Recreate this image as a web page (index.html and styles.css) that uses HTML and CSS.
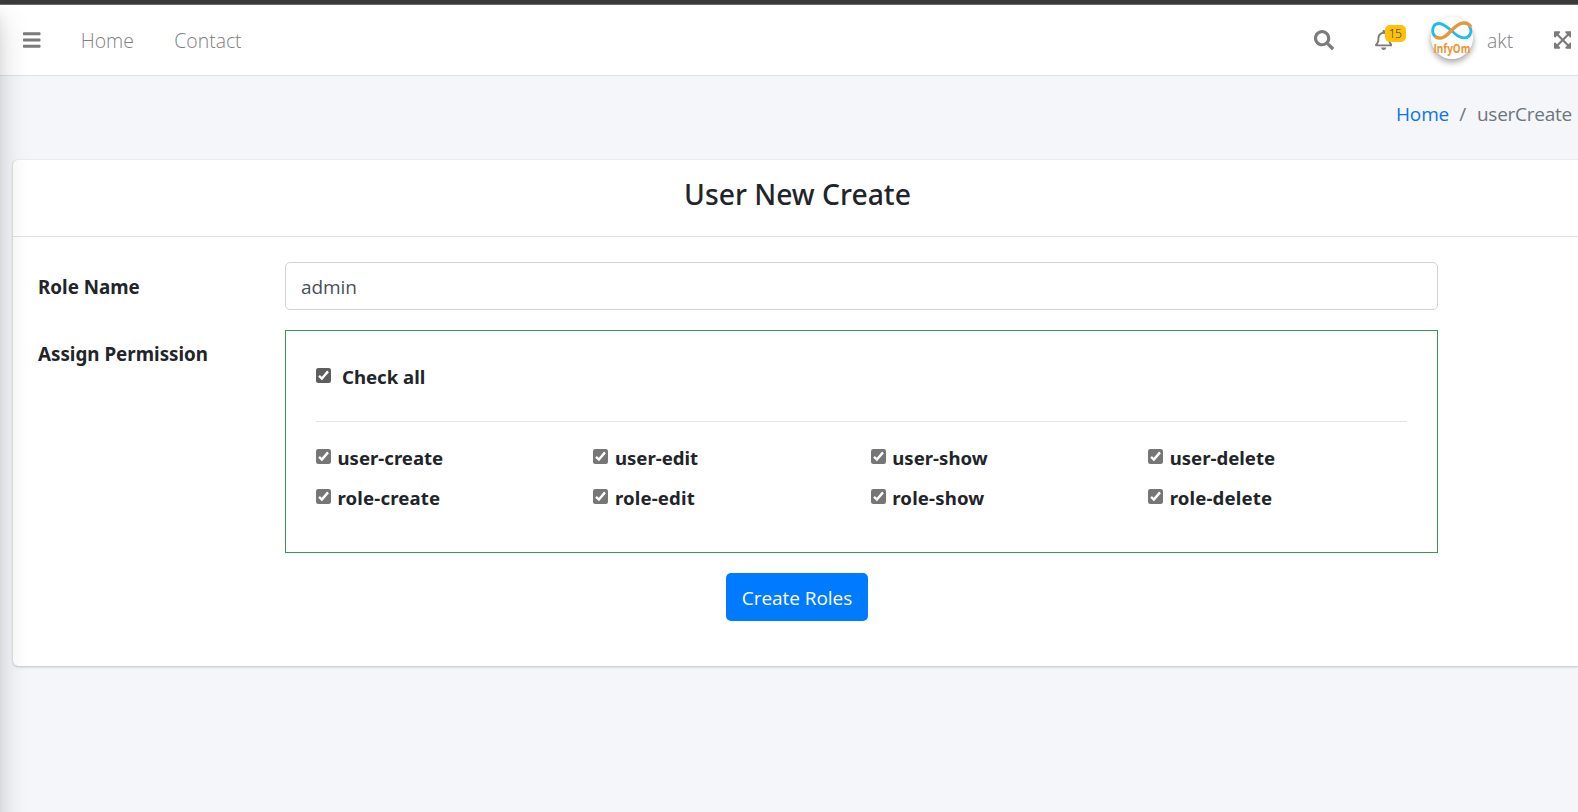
FILE: index.html
```html
<!DOCTYPE html>
<html lang="en">
<head>
<meta charset="utf-8">
<title>User New Create</title>
<link rel="stylesheet" href="styles.css">
</head>
<body>
<svg class="defs" width="0" height="0">
  <symbol id="check" viewBox="0 0 15 15"><rect width="15" height="15" rx="2.3" fill="currentColor"/><path d="M3 7.800 5.900 10.600 12 3.400" fill="none" stroke="#fff" stroke-width="2.400"/></symbol>
</svg>
<div class="topline"></div>
<aside class="sidebar"></aside>
<nav class="navbar">
  <svg class="icon bars" viewBox="0 0 448 512"><path d="M16 132h416c8.837 0 16-7.163 16-16V76c0-8.837-7.163-16-16-16H16C7.163 60 0 67.163 0 76v40c0 8.837 7.163 16 16 16zm0 160h416c8.837 0 16-7.163 16-16v-40c0-8.837-7.163-16-16-16H16c-8.837 0-16 7.163-16 16v40c0 8.837 7.163 16 16 16zm0 160h416c8.837 0 16-7.163 16-16v-40c0-8.837-7.163-16-16-16H16c-8.837 0-16 7.163-16 16v40c0 8.837 7.163 16 16 16z"/></svg>
  <a class="nav-home">Home</a>
  <a class="nav-contact">Contact</a>
  <div class="nav-right">
    <svg class="icon search" viewBox="0 0 512 512"><path d="M505 442.700L405.300 343c-4.500-4.500-10.600-7-17-7H372c27.600-35.300 44-79.700 44-128C416 93.100 322.900 0 208 0S0 93.100 0 208s93.100 208 208 208c48.300 0 92.700-16.400 128-44v16.300c0 6.400 2.500 12.500 7 17l99.700 99.700c9.400 9.400 24.600 9.400 33.900 0l28.300-28.300c9.400-9.400 9.400-24.600.1-34zM208 336c-70.700 0-128-57.200-128-128 0-70.700 57.200-128 128-128 70.700 0 128 57.200 128 128 0 70.700-57.200 128-128 128z"/></svg>
    <div class="bell">
      <svg class="icon" viewBox="0 0 448 512"><path d="M439.390 362.290c-19.320-20.760-55.470-51.990-55.470-154.290 0-77.700-54.480-139.900-127.940-155.160V32c0-17.670-14.320-32-31.980-32s-31.980 14.330-31.980 32v20.840C118.560 68.100 64.080 130.300 64.080 208c0 102.300-36.150 133.530-55.470 154.290-6 6.450-8.660 14.160-8.610 21.710.11 16.400 12.980 32 32.100 32h383.800c19.120 0 32-15.600 32.100-32 .05-7.550-2.610-15.270-8.610-21.710zM67.530 368c21.220-27.970 44.420-74.330 44.530-159.420 0-.2-.06-.38-.06-.58 0-61.860 50.140-112 112-112s112 50.140 112 112c0 .2-.06.38-.06.58.11 85.100 23.310 131.460 44.530 159.420H67.530zM224 512c35.320 0 63.970-28.650 63.970-64H160.030c0 35.350 28.650 64 63.970 64z"/></svg>
      <span class="badge">15</span>
    </div>
    <div class="avatar">
      <svg viewBox="0 0 42 42">
        <path d="M2 16C1 11 3 6.500 8 6.500c7 0 13 9 19 12.500 5 3 10 2.500 12-1.500 1.500-3 1-6-1-8.500M2 16c1 3 3 4.500 6 5" fill="none" stroke="#1fbcf0" stroke-width="2.800"/>
        <path d="M4 19.500c4 3 9 1.500 13-2.500 5-5 9-10.500 15-11 4-.5 6 1 8 4" fill="none" stroke="#e8963a" stroke-width="3.400"/>
        <text x="21" y="36" text-anchor="middle" textLength="37" lengthAdjust="spacingAndGlyphs" class="logo-text">InfyOm</text>
      </svg>
    </div>
    <span class="user">akt</span>
    <svg class="icon expand" viewBox="0 0 448 512"><path d="M448 344v112a23.940 23.940 0 0 1-24 24H312c-21.390 0-32.090-25.900-17-41l36.200-36.200L224 295.600 116.770 402.900 153 439c15.090 15.100 4.390 41-17 41H24a23.940 23.940 0 0 1-24-24V344c0-21.400 25.890-32.100 41-17l36.190 36.200L184.460 256 77.180 148.700 41 185c-15.100 15.100-41 4.400-41-17V56a23.940 23.940 0 0 1 24-24h112c21.390 0 32.090 25.900 17 41l-36.200 36.200L224 216.400l107.230-107.300L295 73c-15.090-15.100-4.390-41 17-41h112a23.940 23.940 0 0 1 24 24v112c0 21.400-25.890 32.100-41 17l-36.190-36.200L263.540 256l107.280 107.300L407 327.100c15.100-15.200 41-4.500 41 16.900z"/></svg>
  </div>
</nav>
<main>
  <div class="breadcrumb"><a>Home</a><span class="sep">/</span><span class="current">userCreate</span></div>
  <section class="card">
    <header><h1>User New Create</h1></header>
    <div class="card-body">
      <div class="row">
        <b class="label">Role Name</b>
        <div class="control">admin</div>
      </div>
      <div class="row">
        <b class="label">Assign Permission</b>
        <div class="permissions">
          <label class="all"><svg><use href="#check"/></svg><span>Check all</span></label>
          <div class="grid">
            <label><svg><use href="#check"/></svg><span>user-create</span></label>
            <label><svg><use href="#check"/></svg><span>user-edit</span></label>
            <label><svg><use href="#check"/></svg><span>user-show</span></label>
            <label><svg><use href="#check"/></svg><span>user-delete</span></label>
            <label class="role"><svg><use href="#check"/></svg><span>role-create</span></label>
            <label class="role"><svg><use href="#check"/></svg><span>role-edit</span></label>
            <label class="role"><svg><use href="#check"/></svg><span>role-show</span></label>
            <label class="role"><svg><use href="#check"/></svg><span>role-delete</span></label>
          </div>
        </div>
      </div>
      <div class="actions"><button>Create Roles</button></div>
    </div>
  </section>
</main>
</body>
</html>
```
FILE: styles.css
```css
* { box-sizing: border-box; }
body {
  margin: 0;
  height: 812px;
  position: relative;
  overflow: hidden;
  background: #f4f6f9;
  color: #212529;
  font: 380 19px/30px "Open Sans", "Noto Sans", sans-serif;
}
.defs { display: block; height: 0; }
.topline { height: 5px; background: #3a3a3a; border-bottom: 1px solid #6b6b6b; position: relative; z-index: 3; }
.sidebar {
  position: absolute; z-index: 2; top: 5px; left: -250px; width: 250px; height: 900px;
  box-shadow: 0 14px 28px rgba(0,0,0,.18), 0 10px 10px rgba(0,0,0,.06);
}
.navbar {
  height: 71px; background: #fff; border-bottom: 1px solid #dee2e6;
  display: flex; align-items: center; padding: 0 0 0 23.300px; color: #808080;
  font-size: 19.400px; font-weight: 350;
}
.icon { display: block; width: 17.500px; height: 20px; fill: #7b7b7b; }
.nav-home { margin: 2px 0 0 40px; width: 93.500px; }
.nav-contact { margin-top: 2px; }
.nav-right { margin-left: auto; display: flex; align-items: center; width: 264.500px; }
.search { width: 20px; }
.bell { position: relative; margin-left: 41px; }
.badge {
  position: absolute; left: 10px; top: -5px; width: 21px; height: 17px; border-radius: 5px;
  background: #ffc107; color: #1f2d3d; font-size: 12px; line-height: 17px; text-align: center; letter-spacing: -.5px;
}
.avatar { width: 42px; height: 42px; margin: -4px 0 0 39px; border-radius: 50%; background: #fff; box-shadow: 0 3px 6px rgba(0,0,0,.16), 0 3px 6px rgba(0,0,0,.23); }
.avatar svg { display: block; width: 42px; height: 42px; }
.logo-text { font: bold 12px "Open Sans", sans-serif; fill: #f0942f; }
.user { margin: 2px 0 0 14px; width: 66.500px; }
.breadcrumb { display: flex; justify-content: flex-end; padding: 23px 6px 30.500px 0; color: #6c757d; letter-spacing: -.15px; }
.breadcrumb a { color: #0b74ee; }
.sep { margin: 0 11px 0 10px; }
.current { letter-spacing: -.25px; }
.card {
  margin-left: 13px; width: 1571px; height: 506.500px; background: #fff; border-radius: 5px;
  box-shadow: 0 0 1px rgba(0,0,0,.125), 0 1px 3px rgba(0,0,0,.2);
}
header { height: 77px; border-bottom: 1px solid #dfdfdf; padding-top: 16px; }
h1 { margin: 0 2px 0 0; font: 500 28.300px/36px "Noto Sans", sans-serif; text-align: center; }
.card-body { padding: 25px 146px 0 25px; }
.row { display: grid; grid-template-columns: 247px minmax(0, 1fr); margin-bottom: 20px; }
.label { padding-top: 10px; font: 700 18.800px/30px "Noto Sans", sans-serif; }
.row + .row .label { padding-top: 9px; }
.control { height: 48px; border: 1px solid #ced4da; border-radius: 5px; padding: 9px 15px; color: #495057; letter-spacing: -.1px; }
.permissions { height: 223px; border: 1px solid #3f9355; padding: 30px; font: 700 18.600px/32px "Noto Sans", sans-serif; }
label { display: flex; height: 40px; }
label svg { width: 15px; height: 15px; margin: 7px 6.500px 0 0; color: #767676; }
.all { height: 61px; border-bottom: 1px solid #e4e4e4; margin-bottom: 20px; }
.all svg { margin-right: 11px; color: #5e5e5e; }
.role { letter-spacing: .15px; }
.grid { display: grid; grid-template-columns: repeat(4, 277.400px); }
.actions { width: 1517px; display: flex; justify-content: center; }
button { width: 142px; height: 48px; border: 0; border-radius: 5px; background: #007bff; color: #fff; font: inherit; letter-spacing: -.05px; padding: 2px 0 0 1px; white-space: nowrap; }
```
